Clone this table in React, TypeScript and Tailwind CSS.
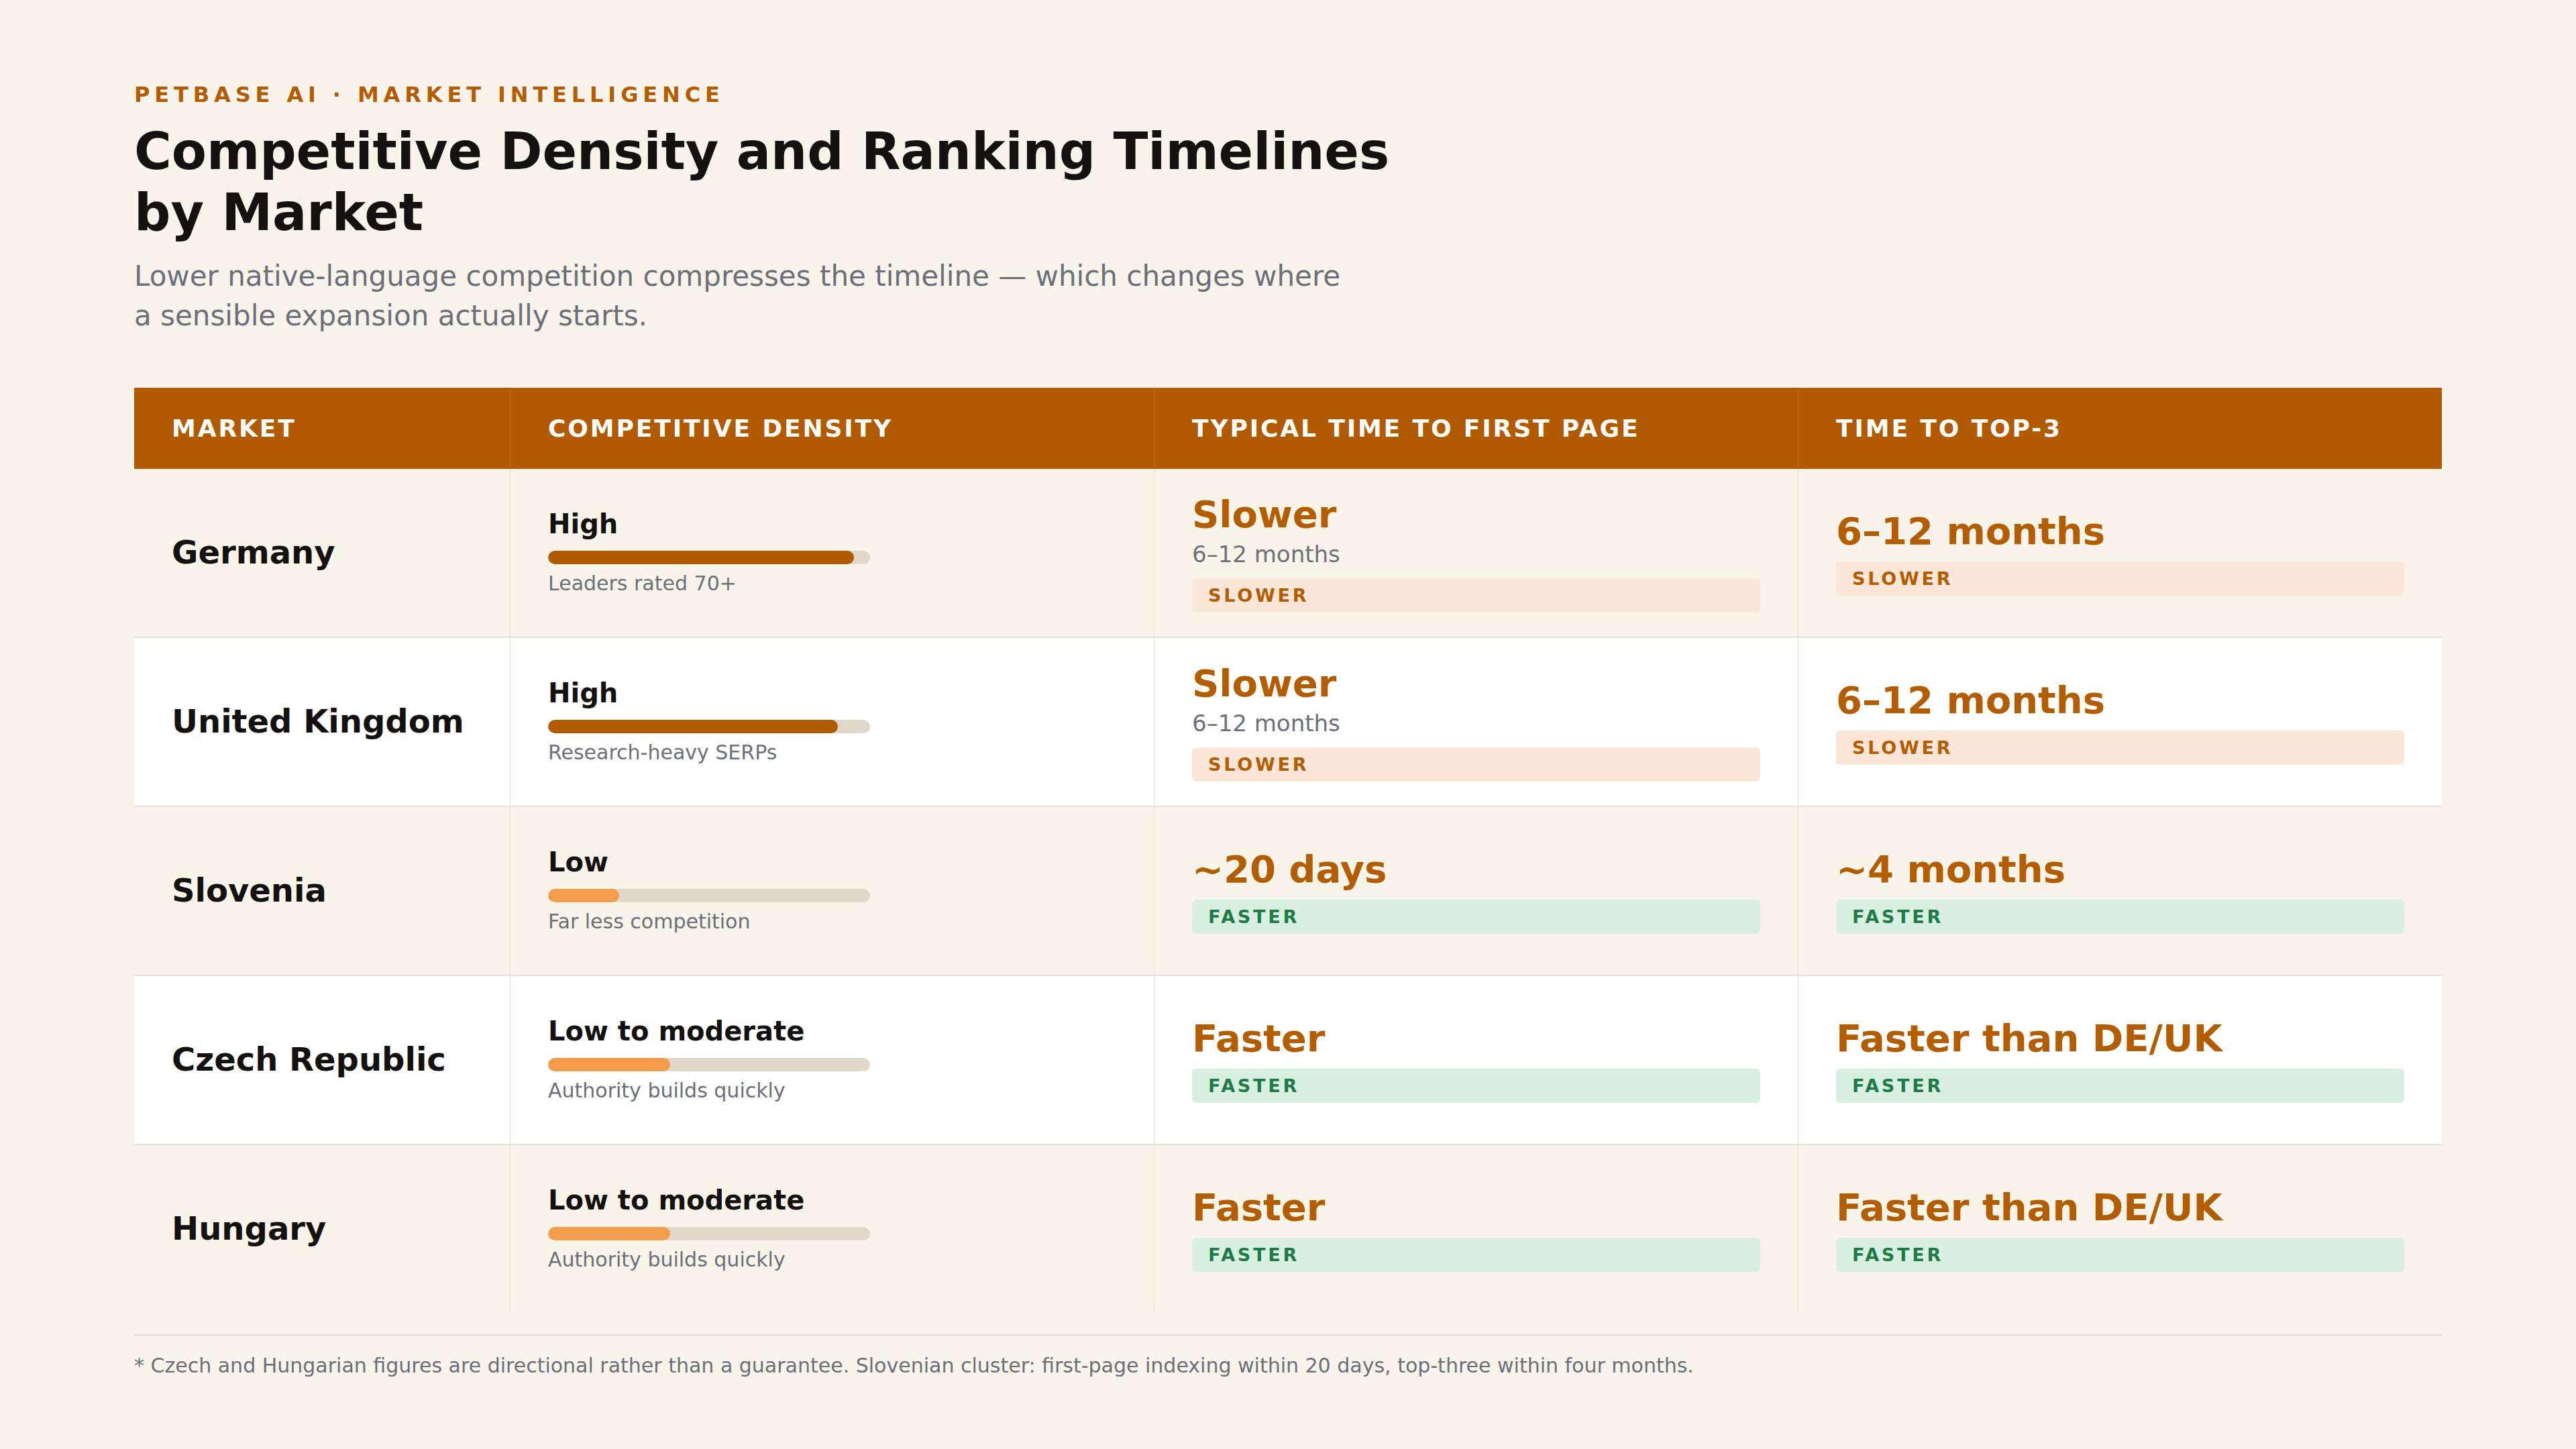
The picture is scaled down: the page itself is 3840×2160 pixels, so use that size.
import React from "react";

type Tone = "slower" | "faster";

type MarketRow = {
  market: string;
  density: string;
  level: number;
  high: boolean;
  note: string;
  firstPage: string;
  firstPageSub?: string;
  firstTone: Tone;
  top3: string;
  top3Tone: Tone;
};

const rows: MarketRow[] = [
  {
    market: "Germany",
    density: "High",
    level: 95,
    high: true,
    note: "Leaders rated 70+",
    firstPage: "Slower",
    firstPageSub: "6–12 months",
    firstTone: "slower",
    top3: "6–12 months",
    top3Tone: "slower",
  },
  {
    market: "United Kingdom",
    density: "High",
    level: 90,
    high: true,
    note: "Research-heavy SERPs",
    firstPage: "Slower",
    firstPageSub: "6–12 months",
    firstTone: "slower",
    top3: "6–12 months",
    top3Tone: "slower",
  },
  {
    market: "Slovenia",
    density: "Low",
    level: 22,
    high: false,
    note: "Far less competition",
    firstPage: "~20 days",
    firstTone: "faster",
    top3: "~4 months",
    top3Tone: "faster",
  },
  {
    market: "Czech Republic",
    density: "Low to moderate",
    level: 38,
    high: false,
    note: "Authority builds quickly",
    firstPage: "Faster",
    firstTone: "faster",
    top3: "Faster than DE/UK",
    top3Tone: "faster",
  },
  {
    market: "Hungary",
    density: "Low to moderate",
    level: 38,
    high: false,
    note: "Authority builds quickly",
    firstPage: "Faster",
    firstTone: "faster",
    top3: "Faster than DE/UK",
    top3Tone: "faster",
  },
];

function Badge({ tone }: { tone: Tone }) {
  const slower = tone === "slower";
  return (
    <div
      className={`mt-3 rounded-md px-6 py-2 text-[27px] leading-[35px] font-bold tracking-[0.14em] ${
        slower ? "bg-[#fce6d8] text-[#b35c00]" : "bg-[#d9f0e0] text-[#1e7b47]"
      }`}
    >
      {slower ? "SLOWER" : "FASTER"}
    </div>
  );
}

function TimeCell({ value, sub, tone }: { value: string; sub?: string; tone: Tone }) {
  return (
    <div className="flex flex-col justify-center border-l border-[#e6ded3] px-14">
      <div className="text-[56px] leading-[1.15] font-bold text-[#b35c00]">{value}</div>
      {sub && <div className="mt-1 text-[34px] leading-[1.4] text-[#6b6f7a]">{sub}</div>}
      <Badge tone={tone} />
    </div>
  );
}

export default function App() {
  const headers = ["MARKET", "COMPETITIVE DENSITY", "TYPICAL TIME TO FIRST PAGE", "TIME TO TOP-3"];

  return (
    <div className="min-h-screen bg-[#f8f4eb] px-[200px] pt-[122px] pb-20 font-['DejaVu_Sans',sans-serif] text-[#141210]">
      <p className="text-[32px] leading-[38px] font-bold tracking-[0.215em] text-[#b35c00]">
        PETBASE AI · MARKET INTELLIGENCE
      </p>
      <h1 className="mt-5 max-w-[1920px] text-[76px] leading-[91px] font-bold">
        Competitive Density and Ranking Timelines by Market
      </h1>
      <p className="mt-5 max-w-[1830px] text-[42px] leading-[59px] text-[#6b6f7a]">
        Lower native-language competition compresses the timeline — which changes where a sensible expansion
        actually starts.
      </p>

      <div className="mt-[78px]">
        {/* header */}
        <div className="grid h-[121px] grid-cols-[560px_1fr_1fr_1fr] bg-[#b15a00]">
          {headers.map((h, i) => (
            <div
              key={h}
              className={`flex items-center px-14 text-[36px] font-bold tracking-[0.08em] text-white ${
                i > 0 ? "border-l border-white/15" : ""
              }`}
            >
              {h}
            </div>
          ))}
        </div>

        {rows.map((r, idx) => (
          <div
            key={r.market}
            className={`grid grid-cols-[560px_1fr_1fr_1fr] ${
              idx % 2 === 0 ? "bg-[#f8f4ea]" : "bg-white"
            } ${idx < rows.length - 1 ? "h-[252px] border-b-2 border-[#e6dfd3]" : "h-[250px]"}`}
          >
            <div className="flex items-center px-14 text-[48px] leading-[1.2] font-bold">{r.market}</div>

            <div className="flex flex-col justify-center border-l border-[#e6ded3] px-14">
              <div className="text-[40px] leading-[48px] font-bold">{r.density}</div>
              <div className="mt-4 h-5 w-[480px] overflow-hidden rounded-full bg-[#e2d8ca]">
                <div
                  className={`h-full rounded-full ${r.high ? "bg-[#b15a00]" : "bg-[#f39c4b]"}`}
                  style={{ width: `${r.level}%` }}
                />
              </div>
              <div className="mt-2 text-[30px] leading-[1.4] text-[#6b6f7a]">{r.note}</div>
            </div>

            <TimeCell value={r.firstPage} sub={r.firstPageSub} tone={r.firstTone} />
            <TimeCell value={r.top3} tone={r.top3Tone} />
          </div>
        ))}
      </div>

      <div className="mt-8 border-t-2 border-[#e3ddcc] pt-[24px] text-[30px] leading-[42px] text-[#6b6f7a]">
        * Czech and Hungarian figures are directional rather than a guarantee. Slovenian cluster: first-page
        indexing within 20 days, top-three within four months.
      </div>
    </div>
  );
}
